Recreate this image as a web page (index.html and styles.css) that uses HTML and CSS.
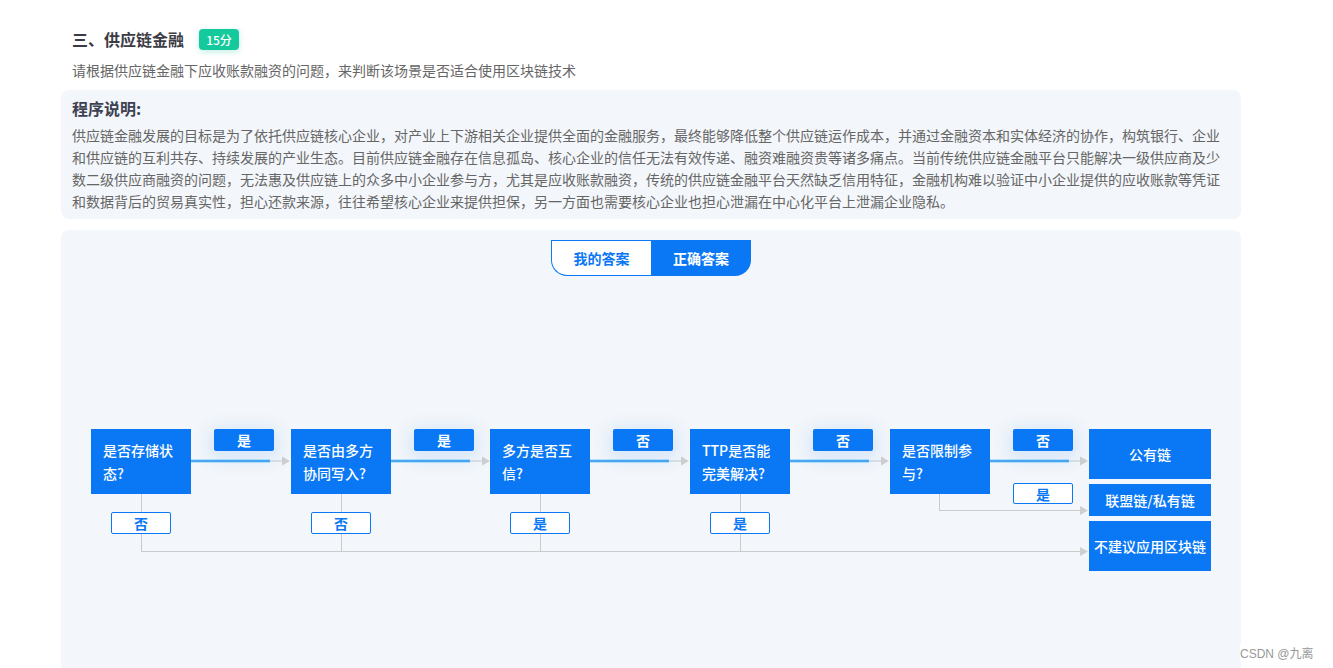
FILE: index.html
```html
<!DOCTYPE html>
<html lang="zh-CN">
<head>
<meta charset="utf-8">
<title>供应链金融</title>
<link rel="stylesheet" href="styles.css">
</head>
<body>
<div class="page">
  <div class="head">
    <div class="title-row">
      <h2 class="title">三、供应链金融</h2>
      <span class="badge">15分</span>
    </div>
    <p class="subtitle">请根据供应链金融下应收账款融资的问题，来判断该场景是否适合使用区块链技术</p>
  </div>
  <div class="desc">
    <h3 class="desc-title">程序说明:</h3>
    <p class="desc-text">供应链金融发展的目标是为了依托供应链核心企业，对产业上下游相关企业提供全面的金融服务，最终能够降低整个供应链运作成本，并通过金融资本和实体经济的协作，构筑银行、企业和供应链的互利共存、持续发展的产业生态。目前供应链金融存在信息孤岛、核心企业的信任无法有效传递、融资难融资贵等诸多痛点。当前传统供应链金融平台只能解决一级供应商及少数二级供应商融资的问题，无法惠及供应链上的众多中小企业参与方，尤其是应收账款融资，传统的供应链金融平台天然缺乏信用特征，金融机构难以验证中小企业提供的应收账款等凭证和数据背后的贸易真实性，担心还款来源，往往希望核心企业来提供担保，另一方面也需要核心企业也担心泄漏在中心化平台上泄漏企业隐私。</p>
  </div>
  <div class="panel">
    <div class="toggle">
      <span class="tab tab-mine">我的答案</span>
      <span class="tab tab-right">正确答案</span>
    </div>
    <div class="flow">
      <svg class="lines" width="1180" height="392" viewBox="0 0 1180 392">
        <g class="glow">
          <line x1="130" y1="185" x2="209" y2="185"/>
          <line x1="330" y1="185" x2="409" y2="185"/>
          <line x1="529" y1="185" x2="608" y2="185"/>
          <line x1="729" y1="185" x2="808" y2="185"/>
          <line x1="929" y1="185" x2="1008" y2="185"/>
        </g>
        <g class="blue">
          <line x1="130" y1="185" x2="209" y2="185"/>
          <line x1="330" y1="185" x2="409" y2="185"/>
          <line x1="529" y1="185" x2="608" y2="185"/>
          <line x1="729" y1="185" x2="808" y2="185"/>
          <line x1="929" y1="185" x2="1008" y2="185"/>
        </g>
        <g class="gray">
          <line x1="209" y1="185" x2="222" y2="185"/>
          <line x1="409" y1="185" x2="421" y2="185"/>
          <line x1="608" y1="185" x2="621" y2="185"/>
          <line x1="808" y1="185" x2="821" y2="185"/>
          <line x1="1008" y1="185" x2="1020" y2="185"/>
          <line x1="80.5" y1="218" x2="80.5" y2="275.5"/>
          <line x1="280.5" y1="218" x2="280.5" y2="275.5"/>
          <line x1="479.5" y1="218" x2="479.5" y2="275.5"/>
          <line x1="679.5" y1="218" x2="679.5" y2="275.5"/>
          <line x1="80" y1="275.5" x2="1020" y2="275.5"/>
          <line x1="878.5" y1="218" x2="878.5" y2="234.5"/>
          <line x1="878" y1="234.5" x2="1020" y2="234.5"/>
        </g>
        <g class="arrow">
          <polygon points="221,180.5 221,189.5 229,185"/>
          <polygon points="421,180.5 421,189.5 429,185"/>
          <polygon points="620,180.5 620,189.5 628,185"/>
          <polygon points="820,180.5 820,189.5 828,185"/>
          <polygon points="1019,180.5 1019,189.5 1027,185"/>
          <polygon points="1019,230 1019,239 1027,234.5"/>
          <polygon points="1019,271 1019,280 1027,275.5"/>
        </g>
      </svg>

      <div class="node" style="left:30px">是否存储状态?</div>
      <div class="node" style="left:230px">是否由多方协同写入?</div>
      <div class="node" style="left:429px">多方是否互信?</div>
      <div class="node" style="left:629px">TTP是否能完美解决?</div>
      <div class="node" style="left:829px">是否限制参与?</div>

      <span class="tag tag-top" style="left:153px">是</span>
      <span class="tag tag-top" style="left:353px">是</span>
      <span class="tag tag-top" style="left:552px">否</span>
      <span class="tag tag-top" style="left:752px">否</span>
      <span class="tag tag-top" style="left:952px">否</span>

      <span class="tag tag-bottom" style="left:50px">否</span>
      <span class="tag tag-bottom" style="left:250px">否</span>
      <span class="tag tag-bottom" style="left:449px">是</span>
      <span class="tag tag-bottom" style="left:649px">是</span>
      <span class="tag tag-side">是</span>

      <div class="result result-public">公有链</div>
      <div class="result result-alliance">联盟链/私有链</div>
      <div class="result result-none">不建议应用区块链</div>
    </div>
  </div>
</div>
<div class="watermark">CSDN @九离</div>
</body>
</html>
```

FILE: styles.css
```css
* { box-sizing: border-box; }
html, body { margin: 0; padding: 0; background: #ffffff; }
body {
  font-family: "Noto Sans CJK SC", "Noto Sans", sans-serif;
  color: #333;
  overflow: hidden;
  height: 668px;
}
.page {
  width: 1180px;
  margin-left: 61px;
  padding-top: 27px;
}
.head { padding-left: 11px; }
.title-row {
  display: flex;
  align-items: center;
  gap: 15px;
  height: 24px;
}
.title {
  margin: 0;
  font-size: 16px;
  font-weight: 600;
  color: #3b3b45;
  line-height: 24px;
}
.badge {
  display: inline-flex;
  align-items: center;
  justify-content: center;
  width: 40px;
  height: 21px;
  border-radius: 4px;
  background: #14c99b;
  color: #fff;
  font-size: 12px;
  font-weight: 500;
  box-shadow: 0 2px 6px rgba(20, 201, 155, 0.25);
}
.subtitle {
  margin: 8px 0 0;
  font-size: 14px;
  line-height: 22px;
  color: #666;
}
.desc {
  margin-top: 9px;
  background: #f3f6fa;
  border-radius: 8px;
  padding: 7px 11px 7px 11px;
}
.desc-title {
  margin: 0;
  font-size: 16px;
  font-weight: 600;
  line-height: 22px;
  color: #3d4250;
}
.desc-text {
  margin: 5px 0 0;
  font-size: 14px;
  line-height: 22px;
  color: #666;
}
.panel {
  margin-top: 11px;
  background: #f3f6fa;
  border-radius: 8px;
  height: 460px;
  padding-top: 10px;
}
.toggle {
  display: flex;
  justify-content: center;
}
.tab {
  width: 100px;
  height: 36px;
  display: flex;
  align-items: center;
  justify-content: center;
  font-size: 14px;
  font-weight: 600;
}
.tab-mine {
  background: #fff;
  color: #0a78f5;
  border: 1px solid #0a78f5;
  border-right: none;
  border-radius: 0 0 0 16px;
}
.tab-right {
  background: #0a78f5;
  color: #fff;
  border-radius: 0 0 16px 0;
}
.flow {
  position: relative;
  height: 392px;
}
.lines {
  position: absolute;
  left: 0;
  top: 0;
}
.lines .glow line { stroke: #7fcaf7; stroke-width: 3; }
.lines .blue line { stroke: #1488ee; stroke-width: 1; }
.lines .gray line { stroke: #cbcbcb; stroke-width: 1; }
.lines .arrow polygon { fill: #cfcfcf; }
.node {
  position: absolute;
  top: 153px;
  width: 100px;
  height: 65px;
  background: #0a78f5;
  color: #fff;
  font-size: 14px;
  font-weight: 500;
  line-height: 23px;
  padding: 0 12px;
  display: flex;
  align-items: center;
}
.tag {
  position: absolute;
  width: 60px;
  height: 22px;
  display: flex;
  align-items: center;
  justify-content: center;
  font-size: 14px;
  font-weight: 600;
  border-radius: 2px;
}
.tag-top {
  top: 153px;
  background: #0a78f5;
  color: #fff;
  box-shadow: 0 4px 18px 4px rgba(10, 120, 245, 0.13);
}
.tag-bottom {
  top: 236px;
  background: #fff;
  color: #0a78f5;
  border: 1px solid #0a78f5;
}
.tag-side {
  left: 952px;
  top: 207px;
  height: 21px;
  background: #fff;
  color: #0a78f5;
  border: 1px solid #0a78f5;
}
.result {
  position: absolute;
  left: 1028px;
  width: 122px;
  background: #0a78f5;
  color: #fff;
  font-size: 14px;
  font-weight: 500;
  display: flex;
  align-items: center;
  justify-content: center;
  white-space: nowrap;
}
.result-public { top: 153px; height: 50px; }
.result-alliance { top: 208px; height: 32px; }
.result-none { top: 245px; height: 50px; }
.watermark {
  position: absolute;
  left: 1240px;
  top: 644px;
  font-family: "Liberation Sans", "Noto Sans CJK SC", sans-serif;
  font-size: 12px;
  color: #999;
  background: #fff;
  padding-right: 10px;
}
```
